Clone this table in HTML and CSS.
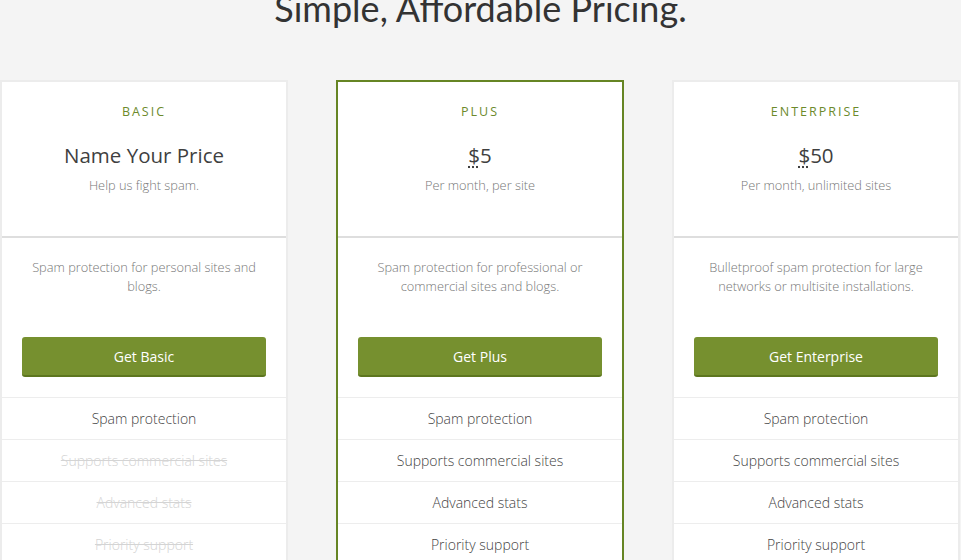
FILE: index.html
```html
<!DOCTYPE html>
<html>
<head>
<meta charset="utf-8">
<link rel="stylesheet" href="styles.css">
</head>
<body>
<h1 class="title">Simple, Affordable Pricing.</h1>
<div class="plans">
  <div class="card">
    <div class="head">
      <div class="tier">BASIC</div>
      <div class="price">Name Your Price</div>
      <div class="sub">Help us fight spam.</div>
    </div>
    <div class="mid">
      <p class="desc">Spam protection for personal sites and blogs.</p>
      <a class="btn">Get Basic</a>
    </div>
    <ul class="features">
      <li>Spam protection</li>
      <li class="off">Supports commercial sites</li>
      <li class="off">Advanced stats</li>
      <li class="off">Priority support</li>
    </ul>
  </div>
  <div class="card featured">
    <div class="head">
      <div class="tier">PLUS</div>
      <div class="price"><abbr class="cur">$</abbr>5</div>
      <div class="sub">Per month, per site</div>
    </div>
    <div class="mid">
      <p class="desc">Spam protection for professional or commercial sites and blogs.</p>
      <a class="btn">Get Plus</a>
    </div>
    <ul class="features">
      <li>Spam protection</li>
      <li>Supports commercial sites</li>
      <li>Advanced stats</li>
      <li>Priority support</li>
    </ul>
  </div>
  <div class="card">
    <div class="head">
      <div class="tier">ENTERPRISE</div>
      <div class="price"><abbr class="cur">$</abbr>50</div>
      <div class="sub">Per month, unlimited sites</div>
    </div>
    <div class="mid">
      <p class="desc">Bulletproof spam protection for large networks or multisite installations.</p>
      <a class="btn">Get Enterprise</a>
    </div>
    <ul class="features">
      <li>Spam protection</li>
      <li>Supports commercial sites</li>
      <li>Advanced stats</li>
      <li>Priority support</li>
    </ul>
  </div>
</div>
</body>
</html>
```
FILE: styles.css
```css
html, body {
  margin: 0;
  padding: 0;
  background: #f4f4f4;
  font-family: "Open Sans", "Liberation Sans", sans-serif;
  color: #444;
}
.title {
  margin: -12px 0 52px;
  height: 40px;
  line-height: 40px;
  font-family: Lato, "Open Sans", sans-serif;
  font-weight: 400;
  font-size: 36px;
  color: #333;
  text-align: center;
}
.plans {
  display: flex;
  gap: 48px;
  width: 960px;
}
.card {
  box-sizing: border-box;
  width: 288px;
  background: #fff;
  border: 2px solid #ececec;
  border-bottom: none;
  text-align: center;
}
.card.featured {
  border-color: #668524;
}
.head {
  box-sizing: border-box;
  height: 156px;
  padding-top: 21px;
  border-bottom: 2px solid #dedede;
}
.tier {
  font-size: 12.5px;
  line-height: 18px;
  letter-spacing: 2px;
  color: #6c8a2b;
  font-weight: 400;
}
.price {
  margin-top: 20px;
  font-size: 20.5px;
  line-height: 28px;
  color: #3f3f3f;
}
.cur {
  text-decoration: underline dotted;
  text-underline-offset: 3px;
}
.sub {
  margin-top: 7px;
  font-size: 12.8px;
  line-height: 18px;
  color: #777;
  font-weight: 300;
}
.mid {
  padding: 20px 20px 20px;
}
.desc {
  margin: 0 8px;
  height: 79px;
  font-size: 12.8px;
  line-height: 19px;
  color: #777;
  font-weight: 300;
}
.btn {
  display: block;
  box-sizing: border-box;
  height: 40px;
  line-height: 40px;
  background: #76902f;
  border-bottom: 2px solid #5d761f;
  border-radius: 3px;
  color: #fff;
  font-size: 14px;
}
.features {
  list-style: none;
  margin: 0;
  padding: 0;
}
.features li {
  border-top: 1px solid #ededed;
  line-height: 41px;
  font-size: 14px;
  color: #444;
  font-weight: 300;
}
.features li.off {
  color: #d4d4d4;
  text-decoration: line-through;
}
```
